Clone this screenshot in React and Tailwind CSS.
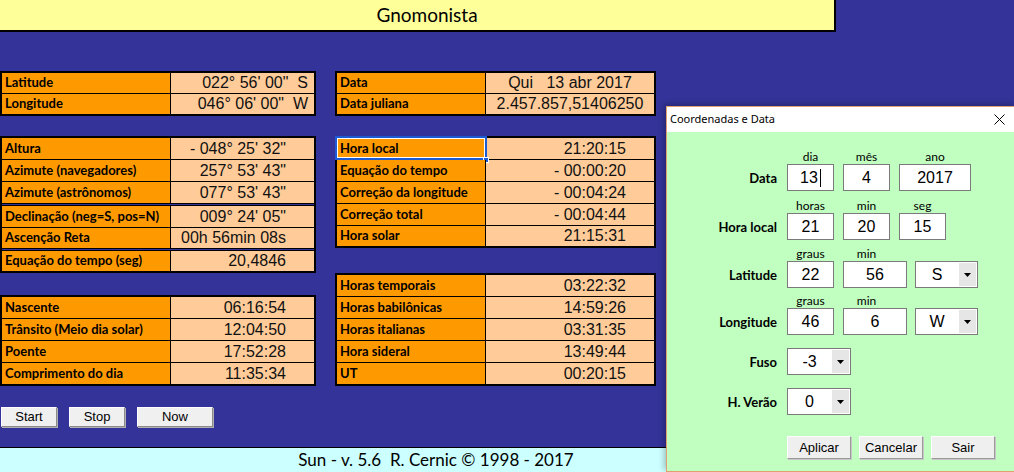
import React from 'react'

const lato = { fontFamily: 'Lato, "DejaVu Sans", sans-serif' }
const arial = { fontFamily: '"Liberation Sans", Arial, sans-serif' }

const leftTop = [
  { label: 'Latitude', value: '022° 56\' 00"  S', mode: 'edge' },
  { label: 'Longitude', value: '046° 06\' 00"  W', mode: 'edge' },
]

const leftMid = [
  { label: 'Altura', value: '- 048° 25\' 32"' },
  { label: 'Azimute (navegadores)', value: '257° 53\' 43"' },
  { label: 'Azimute (astrônomos)', value: '077° 53\' 43"' },
  { label: 'Declinação (neg=S, pos=N)', value: '009° 24\' 05"', double: true },
  { label: 'Ascenção Reta', value: '00h 56min 08s', h: 'h-[20px]' },
  { label: 'Equação do tempo (seg)', value: '20,4846', double: true, h: 'h-[20px]' },
]

const leftBottom = [
  { label: 'Nascente', value: '06:16:54' },
  { label: 'Trânsito (Meio dia solar)', value: '12:04:50' },
  { label: 'Poente', value: '17:52:28' },
  { label: 'Comprimento do dia', value: '11:35:34' },
]

const rightTop = [
  { label: 'Data', value: 'Qui   13 abr 2017', mode: 'center' },
  { label: 'Data juliana', value: '2.457.857,51406250', mode: 'center' },
]

const rightMid = [
  { label: 'Hora local', value: '21:20:15', selected: true },
  { label: 'Equação do tempo', value: '- 00:00:20' },
  { label: 'Correção da longitude', value: '- 00:04:24' },
  { label: 'Correção total', value: '- 00:04:44' },
  { label: 'Hora solar', value: '21:15:31', h: 'h-[20px]' },
]

const rightBottom = [
  { label: 'Horas temporais', value: '03:22:32' },
  { label: 'Horas babilônicas', value: '14:59:26' },
  { label: 'Horas italianas', value: '03:31:35' },
  { label: 'Hora sideral', value: '13:49:44' },
  { label: 'UT', value: '00:20:15' },
]

function Table({ rows, labelW, rowH, width }) {
  return (
    <div className={`border-2 border-black ${width}`}>
      {rows.map((r, i) => (
        <div
          key={r.label}
          className={`flex ${i === 0 ? '' : r.double ? 'border-t-[3px] border-double border-black' : 'border-t border-black'}`}
        >
          <div className={`relative ${labelW} ${r.h || rowH} shrink-0 bg-[#ff9900] border-r border-black flex items-center pl-[3px] text-[13px] font-bold text-black whitespace-nowrap`} style={lato}>
            {r.label}
            {r.selected && (
              <>
                <div className="absolute -left-[2px] -top-[2px] -right-[2px] -bottom-[1px] border-2 border-[#1c5bd4] shadow-[inset_0_0_0_1px_white]" />
                <div className="absolute -right-[4px] -bottom-[4px] w-[6px] h-[6px] bg-[#1c5bd4] border border-white" />
              </>
            )}
          </div>
          <div
            className={`flex-1 ${r.h || rowH} bg-[#ffcc99] flex items-center text-[16px] text-[#111] whitespace-pre ${r.mode === 'center' ? 'justify-center' : r.mode === 'edge' ? 'justify-end pr-[6px]' : 'justify-end pr-[28px]'}`}
            style={arial}
          >
            {r.value}
          </div>
        </div>
      ))}
    </div>
  )
}

function OldButton({ children, w }) {
  return (
    <button className={`${w} h-[20px] bg-[#f0f0f0] border border-t-white border-l-white border-b-[#8a8a8a] border-r-[#8a8a8a] shadow-[1px_1px_0_#b0b0b0] text-[13px] text-black flex items-center justify-center`} style={arial}>
      {children}
    </button>
  )
}

function Box({ w, children, caret }) {
  return (
    <div className={`${w} h-[27px] bg-white border border-[#7a7a7a] flex items-center justify-center text-[16px] text-black`} style={arial}>
      {children}
      {caret && <span className="w-px h-[18px] bg-black ml-[2px]" />}
    </div>
  )
}

function Combo({ w, children }) {
  return (
    <div className={`${w} h-[27px] bg-white border border-[#7a7a7a] flex text-[16px] text-black`} style={arial}>
      <div className="flex-1 flex items-center justify-center">{children}</div>
      <div className="w-[17px] m-px bg-[#e6e6e6] flex items-center justify-center">
        <svg width="7" height="4" viewBox="0 0 7 4"><path d="M0 0h7L3.5 4z" fill="#000" /></svg>
      </div>
    </div>
  )
}

function SubLabels({ items }) {
  return (
    <div className="flex h-[20px] items-end pl-[120px] gap-[9px]">
      {items.map(([t, w], i) => (
        <div key={i} className={`${w} text-center text-[12px] leading-[14px] text-black`} style={lato}>{t}</div>
      ))}
    </div>
  )
}

function FieldRow({ label, children, className = '' }) {
  return (
    <div className={`flex h-[27px] items-center ${className}`}>
      <div className="w-[110px] text-right text-[13px] font-bold text-black pt-[2px]" style={lato}>{label}</div>
      <div className="ml-[10px] flex gap-[9px]">{children}</div>
    </div>
  )
}

function DlgButton({ children }) {
  return (
    <button className="w-[64px] h-[23px] bg-[#efefef] border border-t-white border-l-white border-b-[#9a9a9a] border-r-[#9a9a9a] shadow-[1px_1px_0_#c8c8c8] text-[13px] text-black flex items-center justify-center" style={arial}>
      {children}
    </button>
  )
}

function Dialog() {
  return (
    <div className="absolute left-[666px] top-[106px] w-[350px] h-[366px] border border-[#e0a070] flex flex-col shadow-[-2px_-2px_6px_rgba(0,0,0,0.25)]">
      <div className="h-[25px] bg-white flex items-center justify-between pl-[3px] pr-[10px]">
        <span className="text-[11px] text-black" style={{ fontFamily: '"Noto Sans", "Open Sans", sans-serif' }}>Coordenadas e Data</span>
        <svg width="11" height="11" viewBox="0 0 11 11"><path d="M0.5 0.5l10 10M10.5 0.5l-10 10" stroke="#000" strokeWidth="1" /></svg>
      </div>
      <div className="flex-1 bg-[#c0ffc0] pt-[12px]">
        <SubLabels items={[['dia', 'w-[47px]'], ['mês', 'w-[47px]'], ['ano', 'w-[72px]']]} />
        <FieldRow label="Data">
          <Box w="w-[47px]" caret>13</Box>
          <Box w="w-[47px]">4</Box>
          <Box w="w-[72px]">2017</Box>
        </FieldRow>
        <div className="h-[2px]" />
        <SubLabels items={[['horas', 'w-[47px]'], ['min', 'w-[47px]'], ['seg', 'w-[47px]']]} />
        <FieldRow label="Hora local">
          <Box w="w-[47px]">21</Box>
          <Box w="w-[47px]">20</Box>
          <Box w="w-[47px]">15</Box>
        </FieldRow>
        <div className="h-[1px]" />
        <SubLabels items={[['graus', 'w-[47px]'], ['min', 'w-[47px]']]} />
        <FieldRow label="Latitude">
          <Box w="w-[47px]">22</Box>
          <Box w="w-[64px]">56</Box>
          <div className="-ml-px"><Combo w="w-[63px]">S</Combo></div>
        </FieldRow>
        <SubLabels items={[['graus', 'w-[47px]'], ['min', 'w-[47px]']]} />
        <FieldRow label="Longitude">
          <Box w="w-[47px]">46</Box>
          <Box w="w-[64px]">6</Box>
          <div className="-ml-px"><Combo w="w-[63px]">W</Combo></div>
        </FieldRow>
        <FieldRow label="Fuso" className="mt-[13px]">
          <Combo w="w-[64px]">-3</Combo>
        </FieldRow>
        <FieldRow label="H. Verão" className="mt-[13px]">
          <Combo w="w-[64px]">0</Combo>
        </FieldRow>
        <div className="mt-[21px] pl-[120px] flex gap-[8px]">
          <DlgButton>Aplicar</DlgButton>
          <DlgButton>Cancelar</DlgButton>
          <DlgButton>Sair</DlgButton>
        </div>
      </div>
    </div>
  )
}

export default function App() {
  return (
    <div className="relative w-[1014px] h-[472px] overflow-hidden bg-[#333399] flex flex-col">
      <div className="h-[32px] w-[836px] shrink-0 bg-[#ffff99] border-r-2 border-b-2 border-black flex items-center justify-center pl-[20px] text-[19px] text-black" style={lato}>
        Gnomonista
      </div>

      <div className="flex-1 flex gap-[19px] pt-[39px]">
        <div className="w-[316px] flex flex-col">
          <Table rows={leftTop} labelW="w-[169px]" rowH="h-[20px]" width="w-[316px]" />
          <div className="mt-[20px]">
            <Table rows={leftMid} labelW="w-[169px]" rowH="h-[21px]" width="w-[316px]" />
          </div>
          <div className="mt-[22px]">
            <Table rows={leftBottom} labelW="w-[169px]" rowH="h-[21px]" width="w-[316px]" />
          </div>
          <div className="mt-[21px] ml-[1px] flex gap-[12px]">
            <OldButton w="w-[56px]">Start</OldButton>
            <OldButton w="w-[56px]">Stop</OldButton>
            <OldButton w="w-[76px]">Now</OldButton>
          </div>
        </div>

        <div className="w-[321px] flex flex-col">
          <Table rows={rightTop} labelW="w-[149px]" rowH="h-[20px]" width="w-[321px]" />
          <div className="mt-[20px]">
            <Table rows={rightMid} labelW="w-[149px]" rowH="h-[21px]" width="w-[321px]" />
          </div>
          <div className="mt-[25px]">
            <Table rows={rightBottom} labelW="w-[149px]" rowH="h-[21px]" width="w-[321px]" />
          </div>
        </div>
      </div>

      <div className="h-[25px] shrink-0 bg-[#ccffff] border-t border-black flex">
        <div className="w-[872px] flex items-center justify-center text-[17px] text-black whitespace-pre" style={lato}>
          Sun - v. 5.6  R. Cernic © 1998 - 2017
        </div>
      </div>

      <Dialog />
    </div>
  )
}
